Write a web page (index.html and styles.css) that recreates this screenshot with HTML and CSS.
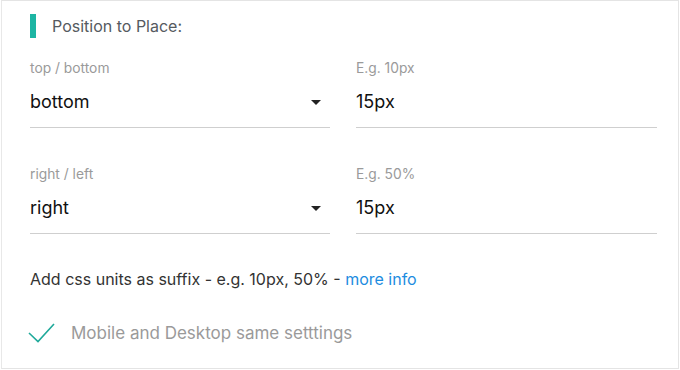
FILE: index.html
```html
<!DOCTYPE html>
<html lang="en">
<head>
    <meta charset="UTF-8">
    <meta name="viewport" content="width=device-width, initial-scale=1.0">
    <title>Position to Place</title>
    <link rel="stylesheet" href="styles.css">
</head>
<body>
    <div class="card">
        <div class="heading">
            <span class="heading-bar"></span>
            <span class="heading-text">Position to Place:</span>
        </div>

        <div class="fields">
            <div class="field">
                <div class="label">top / bottom</div>
                <div class="control">
                    <span>bottom</span>
                    <span class="caret"></span>
                </div>
            </div>
            <div class="field">
                <div class="label">E.g. 10px</div>
                <div class="control">
                    <span>15px</span>
                </div>
            </div>
            <div class="field">
                <div class="label">right / left</div>
                <div class="control">
                    <span>right</span>
                    <span class="caret"></span>
                </div>
            </div>
            <div class="field">
                <div class="label">E.g. 50%</div>
                <div class="control">
                    <span>15px</span>
                </div>
            </div>
        </div>

        <p class="help">Add css units as suffix - e.g. 10px, 50% - <a href="#">more info</a></p>

        <div class="check-row">
            <svg class="check" width="28" height="22" viewBox="0 0 28 22">
                <path d="M1 11 L10 19.5 L26 2" fill="none" stroke="#1fa99a" stroke-width="1.6"/>
            </svg>
            <span class="check-label">Mobile and Desktop same setttings</span>
        </div>
    </div>
</body>
</html>
```

FILE: styles.css
```css
body {
    margin: 0;
    font-family: Inter, "Noto Sans", sans-serif;
    background-color: #fff;
}
.card {
    margin-left: 1px;
    width: 678px;
    height: 369px;
    box-sizing: border-box;
    border: 1px solid #e4e4e4;
    border-left-color: #e8e8e8;
    padding: 13px 21px 0 28px;
}
.heading {
    display: flex;
    align-items: center;
    height: 24px;
}
.heading-bar {
    width: 6px;
    height: 24px;
    background-color: #1db5a3;
}
.heading-text {
    margin-left: 16px;
    font-size: 16px;
    color: #555a60;
}
.fields {
    display: grid;
    grid-template-columns: 300px 301px;
    column-gap: 26px;
    row-gap: 38px;
    margin-top: 22px;
}
.label {
    font-size: 13.8px;
    line-height: 16px;
    color: #9a9a9a;
}
.control {
    display: flex;
    align-items: center;
    justify-content: space-between;
    margin-top: 14px;
    padding-bottom: 13px;
    line-height: 24px;
    font-size: 18px;
    color: #111;
    border-bottom: 1px solid #cfcfcf;
}
.caret {
    width: 0;
    height: 0;
    margin-right: 9px;
    border-left: 5px solid transparent;
    border-right: 5px solid transparent;
    border-top: 5px solid #222;
}
.help {
    margin: 35px 0 0;
    font-size: 16px;
    line-height: 20px;
    color: #333;
}
.help a {
    color: #1d8ce0;
    text-decoration: none;
}
.check-row {
    display: flex;
    align-items: center;
    margin-top: 33px;
}
.check {
    margin-left: -2px;
}
.check-label {
    margin-left: 15px;
    font-size: 17px;
    line-height: 22px;
    color: #9a9a9a;
}
```
